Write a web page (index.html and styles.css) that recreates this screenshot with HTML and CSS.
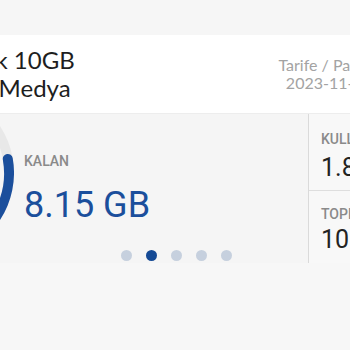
FILE: index.html
```html
<!DOCTYPE html>
<html lang="tr">
<head>
<meta charset="utf-8">
<link rel="stylesheet" href="styles.css">
</head>
<body>
<div class="page">
  <div class="top"></div>
  <header class="header">
    <div class="title">Haftalık 10GB<br>Sosyal Medya</div>
    <div class="meta">Tarife / Paket<br>2023-11-30</div>
  </header>
  <section class="usage">
    <svg class="donut" width="172" height="172" viewBox="0 0 172 172">
      <circle cx="86" cy="86" r="81" fill="none" stroke="#e8e8e8" stroke-width="10"/>
      <circle cx="86" cy="86" r="81" fill="none" stroke="#1b4f9c" stroke-width="10" stroke-dasharray="392 508.9" stroke-linecap="round" transform="rotate(-10 86 86)"/>
    </svg>
    <div class="main">
      <div class="label">KALAN</div>
      <div class="value">8.15 GB</div>
      <div class="dots">
        <span class="dot"></span>
        <span class="dot active"></span>
        <span class="dot"></span>
        <span class="dot"></span>
        <span class="dot"></span>
      </div>
    </div>
    <div class="side">
      <div class="stat first">
        <div class="label">KULLANILAN</div>
        <div class="num">1.85 GB</div>
      </div>
      <div class="stat">
        <div class="label">TOPLAM</div>
        <div class="num">10 GB</div>
      </div>
    </div>
  </section>
  <div class="bottom"></div>
</div>
</body>
</html>
```
FILE: styles.css
```css
html, body {
  margin: 0;
  padding: 0;
}
body {
  background: #f7f7f7;
  font-family: Roboto, "Liberation Sans", sans-serif;
  overflow: hidden;
  width: 350px;
  height: 350px;
}
.page {
  width: 350px;
  overflow: hidden;
}
.top {
  height: 35px;
  background: #f6f6f6;
}
.header {
  height: 78px;
  background: #ffffff;
  display: flex;
  justify-content: space-between;
  align-items: center;
  margin-left: -74px;
  margin-right: -22px;
  font-family: Lato, "Open Sans", sans-serif;
}
.title {
  font-size: 24px;
  line-height: 28px;
  color: #1e1e1e;
}
.meta {
  font-size: 16px;
  line-height: 18px;
  color: #a3a3a3;
  text-align: right;
}
.usage {
  height: 150px;
  display: flex;
  background: #f5f5f5;
  border-top: 1px solid #ededed;
  box-sizing: border-box;
  overflow: hidden;
}
.donut {
  flex: none;
  margin-left: -158px;
  margin-top: -27px;
}
.main {
  flex: 1;
  margin-left: 10px;
  padding-top: 39px;
}
.label {
  font-size: 14px;
  line-height: 16px;
  font-weight: 500;
  color: #8a8a8a;
}
.value {
  margin-top: 16px;
  font-size: 36px;
  line-height: 40px;
  color: #1b4f9c;
}
.dots {
  display: flex;
  justify-content: center;
  gap: 14px;
  margin-top: 25px;
  padding-left: 20px;
}
.dot {
  width: 11px;
  height: 11px;
  border-radius: 50%;
  background: #c6d0de;
}
.dot.active {
  background: #154a95;
}
.side {
  flex: none;
  width: 41px;
  border-left: 1px solid #dadada;
  background: #f8f8f8;
}
.stat {
  padding-left: 12px;
  padding-top: 17px;
  white-space: nowrap;
}
.stat.first {
  height: 77px;
  box-sizing: border-box;
  border-bottom: 1px solid #dedede;
}
.stat .label {
  margin-bottom: 7px;
}
.stat + .stat {
  padding-top: 15px;
}
.stat + .stat .label {
  margin-bottom: 4px;
}
.num {
  font-size: 25px;
  line-height: 28px;
  color: #222;
}
```
